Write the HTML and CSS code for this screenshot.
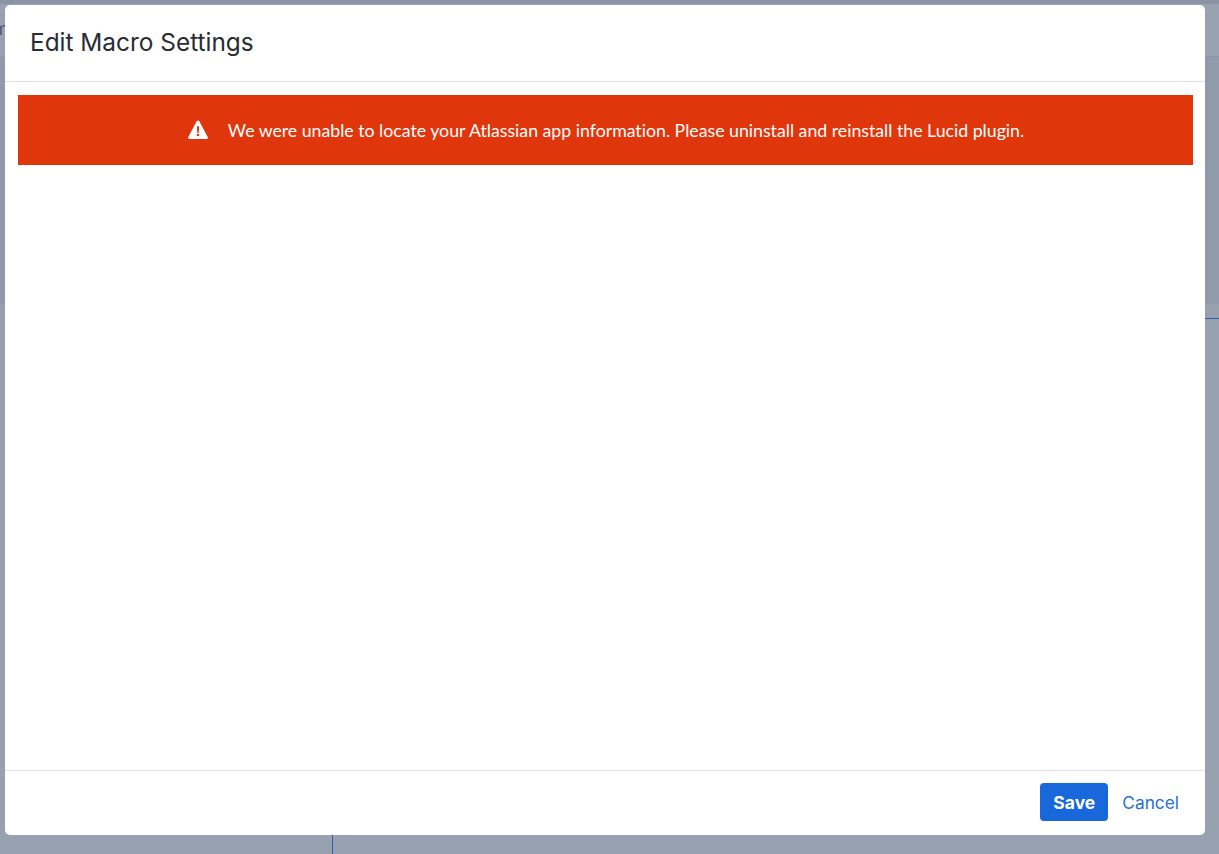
FILE: index.html
```html
<!DOCTYPE html>
<html lang="en">
<head>
<meta charset="utf-8">
<title>Edit Macro Settings</title>
<link rel="stylesheet" href="styles.css">
</head>
<body>
<div class="page">
  <header class="page-top"><span class="page-top-text">m</span></header>
  <div class="page-band"></div>
  <div class="page-rule"></div>
  <div class="page-vline"></div>
</div>
<div class="modal" role="dialog">
  <div class="modal-head"><h1 class="modal-title">Edit Macro Settings</h1></div>
  <div class="modal-body">
    <div class="alert">
      <svg class="alert-icon" width="20" height="20" viewBox="0 0 20 20" aria-hidden="true">
        <path fill="#fff" fill-rule="evenodd" d="M10 .4c.5 0 .9.3 1.200.7l8.500 15.900c.5.9-.1 1.900-1.100 1.900H1.400c-1 0-1.600-1-1.100-1.900L8.800 1.100c.3-.4.7-.7 1.200-.7zM8.900 6.200l.3 6.500h1.600l.3-6.500zM10 13.700a1.300 1.300 0 1 0 0 2.600 1.300 1.300 0 0 0 0-2.600z"/>
      </svg>
      <span class="alert-text">We were unable to locate your Atlassian app information. Please uninstall and reinstall the Lucid plugin.</span>
    </div>
  </div>
  <div class="modal-foot">
    <button class="btn-save" type="button">Save</button>
    <a class="btn-cancel" href="#">Cancel</a>
  </div>
</div>
</body>
</html>
```
FILE: styles.css
```css
* { box-sizing: border-box; }
html, body { margin: 0; height: 100%; overflow: hidden; }
body { background: #98a1b0; font-family: Inter, "Liberation Sans", sans-serif; }

.page { height: 854px; display: flex; flex-direction: column; }
.page-top { height: 57px; flex: none; background: #99a2b1; border-top: 4px solid #8b94a4; border-bottom: 1px solid #8e97a6; overflow: hidden; }
.page-top-text { display: block; margin: 14px 0 0 -7px; font-size: 18px; line-height: 22px; color: #4d5a70; }
.page-band { height: 247px; flex: none; background: #919aaa; }
.page-rule { height: 1px; flex: none; margin: 14px 0 0 1205px; background: #2f5fb0; }
.page-vline { width: 1px; flex: none; height: 19px; margin: 516px 0 0 332px; background: #2f5fb0; }

.modal { position: absolute; left: 5px; top: 5px; width: 1200px; height: 830px; background: #fff; border-radius: 5px; display: flex; flex-direction: column; overflow: hidden; }
.modal-head { height: 77px; flex: none; display: flex; align-items: center; padding: 0 25px 2px; border-bottom: 1px solid #dfe1e6; }
.modal-title { margin: 0; font-size: 24.400px; line-height: 32px; font-weight: 400; color: #282c33; }
.modal-body { flex: 1; padding: 13px 12px 0 13px; }
.alert { height: 70px; background: #e0360c; display: flex; align-items: center; justify-content: center; gap: 20px; padding-left: 1px; }
.alert-icon { flex: none; }
.alert-text { font-family: Lato, "Liberation Sans", sans-serif; font-size: 17.720px; line-height: 24px; padding-top: 2px; color: #fff; font-variant-ligatures: none; }
.modal-foot { height: 65px; flex: none; display: flex; align-items: center; justify-content: flex-end; gap: 14px; padding: 0 26px 2px 0; border-top: 1px solid #dfe1e6; }
.btn-save { width: 68px; height: 38px; border: 0; border-radius: 4px; background: #1868db; color: #fff; font-family: Inter, "Liberation Sans", sans-serif; font-size: 17.500px; font-weight: 700; }
.btn-cancel { font-size: 17.300px; line-height: 24px; padding-top: 2px; color: #2571d6; text-decoration: none; }
```
